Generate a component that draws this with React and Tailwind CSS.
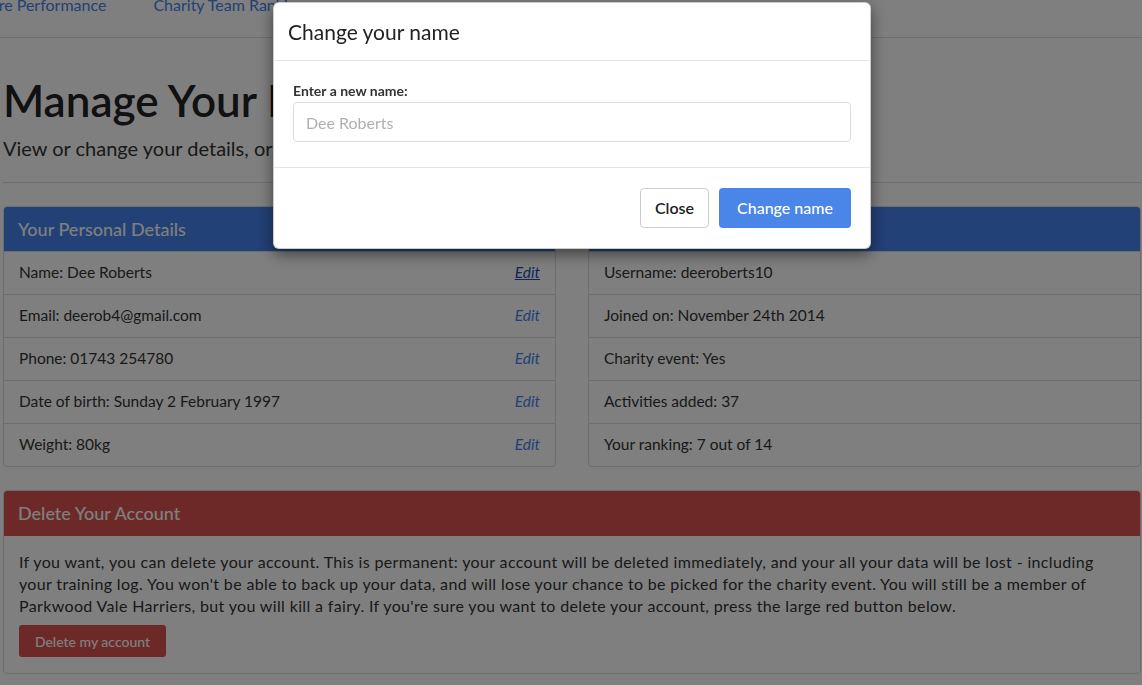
import { useState } from 'react';

const PERSONAL = [
  { label: 'Name: Dee Roberts', hover: true },
  { label: 'Email: deerob4@gmail.com' },
  { label: 'Phone: 01743 254780' },
  { label: 'Date of birth: Sunday 2 February 1997' },
  { label: 'Weight: 80kg' },
];

const STATS = [
  'Username: deeroberts10',
  'Joined on: November 24th 2014',
  'Charity event: Yes',
  'Activities added: 37',
  'Your ranking: 7 out of 14',
];

function Panel({ title, children }) {
  return (
    <div className="overflow-hidden rounded-[4px] border border-[#ddd] bg-white">
      <div className="flex h-[44px] items-center bg-[#4582ec] px-[14px] text-[18px] font-medium text-white">{title}</div>
      {children}
    </div>
  );
}

function Row({ children }) {
  return <div className="flex h-[43px] items-center justify-between border-t border-[#ddd] px-[15px] text-[15.5px]">{children}</div>;
}

export default function App() {
  const [name, setName] = useState('');

  return (
    <div className="min-h-screen bg-white font-['Lato',sans-serif] text-[16px] text-[#333]">
      <nav className="h-[38px] overflow-hidden border-b border-[#ddd]">
        <ul className="ml-[-51px] mt-[-5px] flex gap-[47px] leading-[20px] text-[#4582ec]">
          <li>Compare Performance</li>
          <li>Charity Team Rankings</li>
        </ul>
      </nav>

      <div className="pl-[3px] pr-px">
        <h1 className="mt-[40px] text-[44px] font-semibold leading-none text-[#222]">Manage Your Profile</h1>
        <p className="mt-[12px] text-[20px] leading-[28px]">View or change your details, or delete your account.</p>
        <hr className="mt-[20px] border-[#ddd]" />

        <div className="mt-[23px] grid grid-cols-2 gap-[32px]">
          <Panel title="Your Personal Details">
            {PERSONAL.map((p) => (
              <Row key={p.label}>
                <span>{p.label}</span>
                <a className={`italic ${p.hover ? 'text-[#1a4fb0] underline' : 'text-[#4582ec]'}`}>Edit</a>
              </Row>
            ))}
          </Panel>
          <Panel title="Your Account Statistics">
            {STATS.map((s) => (
              <Row key={s}>
                <span>{s}</span>
              </Row>
            ))}
          </Panel>
        </div>

        <div className="mt-[23px] overflow-hidden rounded-[4px] border border-[#ddd] bg-white">
          <div className="flex h-[45px] items-center bg-[#d9534f] px-[14px] text-[18px] font-medium text-white">Delete Your Account</div>
          <div className="px-[15px] pb-[16px] pt-[15px]">
            <p className="leading-[22px] tracking-[0.35px]">
              If you want, you can delete your account. This is permanent: your account will be deleted immediately, and your all your data will be lost - including
              <br />
              your training log. You won't be able to back up your data, and will lose your chance to be picked for the charity event. You will still be a member of
              <br />
              Parkwood Vale Harriers, but you will kill a fairy. If you're sure you want to delete your account, press the large red button below.
            </p>
            <button className="mt-[8px] h-[32px] w-[147px] rounded-[3px] bg-[#d9534f] text-[14px] font-medium text-white">Delete my account</button>
          </div>
        </div>
      </div>

      {/* backdrop + modal */}
      <div className="fixed inset-0 bg-black/50" />
      <div className="fixed left-[273px] top-[2px] w-[598px] rounded-[6px] border border-black/20 bg-white shadow-[0_5px_15px_rgba(0,0,0,0.5)]">
        <div className="flex h-[58px] items-center border-b border-[#e5e5e5] px-[14px] text-[21px] text-[#222]">Change your name</div>
        <div className="px-[19px] pb-[25px] pt-[20px]">
          <label className="mb-px block text-[14px] font-bold leading-[20px] text-[#333]">Enter a new name:</label>
          <input
            value={name}
            onChange={(e) => setName(e.target.value)}
            placeholder="Dee Roberts"
            className="h-[40px] w-full rounded-[4px] border border-[#ddd] px-[12px] text-[16px] outline-none placeholder:text-[#b0b0b0]"
          />
        </div>
        <div className="flex justify-end gap-[10px] border-t border-[#e5e5e5] px-[19px] pb-[20px] pt-[20px]">
          <button className="h-[40px] w-[69px] rounded-[4px] border border-[#ccc] bg-white text-[16px] font-semibold text-[#222]">Close</button>
          <button className="h-[40px] w-[132px] rounded-[4px] bg-[#4a85e8] text-[16px] font-medium text-white">Change name</button>
        </div>
      </div>
    </div>
  );
}
